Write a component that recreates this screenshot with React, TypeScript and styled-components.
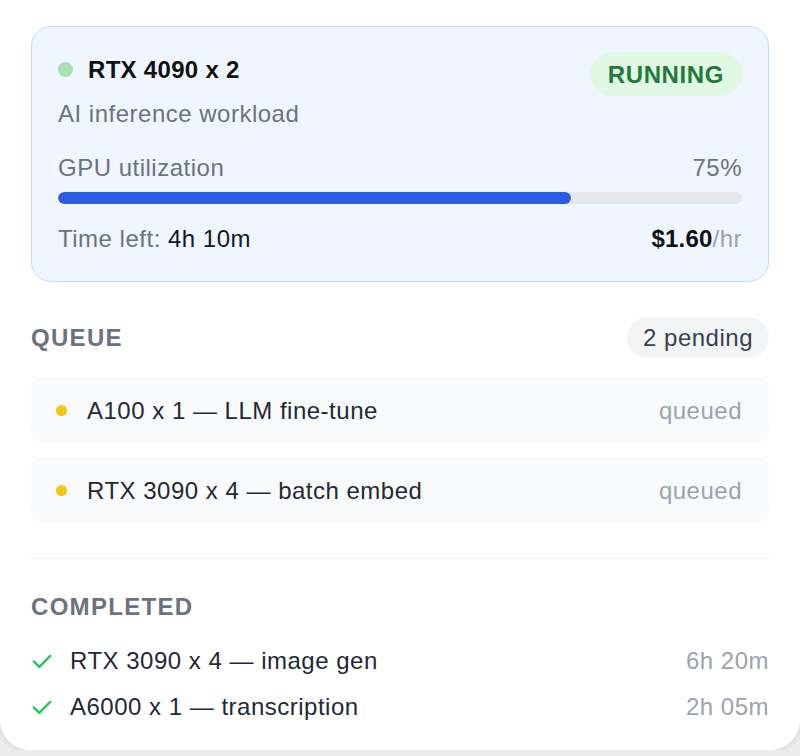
import React from "react";
import styled, { createGlobalStyle } from "styled-components";

const GlobalStyle = createGlobalStyle`
  html, body {
    margin: 0;
    padding: 0;
    background: #ebebeb;
    font-family: "Liberation Sans", Arial, Helvetica, sans-serif;
    font-size: 24px;
    line-height: 25px;
    letter-spacing: 0.5px;
  }
`;

const Panel = styled.div`
  box-sizing: border-box;
  width: 800px;
  height: 750px;
  background: #ffffff;
  border-radius: 0 0 30px 30px;
  box-shadow: 0 2px 6px rgba(0, 0, 0, 0.08);
  padding: 26px 31px 0 31px;
  display: flex;
  flex-direction: column;
`;

const ActiveCard = styled.div`
  box-sizing: border-box;
  height: 256px;
  background: #eff6ff;
  border: 1.5px solid #bfdbfe;
  border-radius: 20px;
  padding: 26px 26px 0 26px;
  display: flex;
  flex-direction: column;
`;

const Row = styled.div`
  display: flex;
  align-items: center;
  justify-content: space-between;
`;

const TopRow = styled(Row)`
  align-items: flex-start;
`;

const TitleWrap = styled.div`
  display: flex;
  align-items: center;
  gap: 15px;
  margin-top: 4px;
`;

const Dot = styled.span<{ $color: string; $size: number }>`
  display: inline-block;
  flex-shrink: 0;
  width: ${(p) => p.$size}px;
  height: ${(p) => p.$size}px;
  border-radius: 50%;
  background: ${(p) => p.$color};
`;

const Title = styled.span`
  font-weight: 700;
  color: #111111;
  letter-spacing: 0.3px;
`;

const Badge = styled.span`
  background: #e1f8e4;
  color: #217a3b;
  font-weight: 700;
  letter-spacing: 0.6px;
  padding: 10px 18px 9px;
  margin-top: -1px;
  border-radius: 22px;
`;

const Subtitle = styled.div`
  color: #6b7280;
  margin-top: 5px;
`;

const MetricRow = styled(Row)`
  margin-top: 29px;
  color: #6b7280;
`;

const Track = styled.div`
  height: 12px;
  border-radius: 6px;
  background: #e5e7eb;
  margin-top: 12px;
  overflow: hidden;
`;

const Fill = styled.div`
  height: 100%;
  border-radius: 6px;
  background: #2b5ce6;
`;

const FooterRow = styled(Row)`
  margin-top: 22px;
  color: #6b7280;
`;

const Strong = styled.span`
  color: #111827;
`;

const Price = styled.span`
  font-weight: 700;
  color: #111111;
  letter-spacing: 0.2px;
`;

const Unit = styled.span`
  color: #9ca3af;
`;

const SectionHeader = styled(Row)<{ $top: number }>`
  margin-top: ${(p) => p.$top}px;
`;

const SectionTitle = styled.span`
  font-weight: 700;
  letter-spacing: 1.3px;
  color: #6b7280;
`;

const Pill = styled.span`
  background: #f3f4f6;
  color: #374151;
  padding: 8px 16px;
  border-radius: 21px;
`;

const QueueList = styled.div`
  display: flex;
  flex-direction: column;
  gap: 14px;
  margin-top: 19px;
`;

const QueueItem = styled.div`
  box-sizing: border-box;
  height: 66px;
  background: #f9fafb;
  border-radius: 14px;
  padding: 0 27px 0 25px;
  display: flex;
  align-items: center;
  justify-content: space-between;
`;

const ItemLabel = styled.div`
  display: flex;
  align-items: center;
  gap: 20px;
  color: #1f2937;
`;

const Muted = styled.span`
  color: #9ca3af;
`;

const Divider = styled.hr`
  border: none;
  border-top: 1.5px solid #f0f1f3;
  margin: 35px 0 0 0;
`;

const DoneList = styled.div`
  display: flex;
  flex-direction: column;
  gap: 21px;
  margin-top: 29px;
`;

const DoneItem = styled(Row)``;

const DoneLabel = styled.div`
  display: flex;
  align-items: center;
  gap: 17px;
  color: #1f2937;
`;

const Check = () => (
  <svg width="22" height="22" viewBox="0 0 24 24" fill="none" stroke="#22c55e" strokeWidth="2.6" strokeLinecap="round" strokeLinejoin="round">
    <path d="M3 12.5l6 6L21 6.5" />
  </svg>
);

const queue = [
  { label: "A100 x 1 — LLM fine-tune" },
  { label: "RTX 3090 x 4 — batch embed" },
];

const done = [
  { label: "RTX 3090 x 4 — image gen", time: "6h 20m" },
  { label: "A6000 x 1 — transcription", time: "2h 05m" },
];

export default function App() {
  const util = 75;
  return (
    <>
      <GlobalStyle />
      <Panel>
        <ActiveCard>
          <TopRow>
            <TitleWrap>
              <Dot $color="#a6e1b5" $size={15} />
              <Title>RTX 4090 x 2</Title>
            </TitleWrap>
            <Badge>RUNNING</Badge>
          </TopRow>
          <Subtitle>AI inference workload</Subtitle>
          <MetricRow>
            <span>GPU utilization</span>
            <span>{util}%</span>
          </MetricRow>
          <Track>
            <Fill style={{ width: `${util}%` }} />
          </Track>
          <FooterRow>
            <span>
              Time left: <Strong>4h 10m</Strong>
            </span>
            <span>
              <Price>$1.60</Price>
              <Unit>/hr</Unit>
            </span>
          </FooterRow>
        </ActiveCard>

        <SectionHeader $top={35}>
          <SectionTitle>QUEUE</SectionTitle>
          <Pill>2 pending</Pill>
        </SectionHeader>
        <QueueList>
          {queue.map((q) => (
            <QueueItem key={q.label}>
              <ItemLabel>
                <Dot $color="#f5c518" $size={11} />
                <span>{q.label}</span>
              </ItemLabel>
              <Muted>queued</Muted>
            </QueueItem>
          ))}
        </QueueList>

        <Divider />

        <SectionHeader $top={35}>
          <SectionTitle>COMPLETED</SectionTitle>
        </SectionHeader>
        <DoneList>
          {done.map((d) => (
            <DoneItem key={d.label}>
              <DoneLabel>
                <Check />
                <span>{d.label}</span>
              </DoneLabel>
              <Muted>{d.time}</Muted>
            </DoneItem>
          ))}
        </DoneList>
      </Panel>
    </>
  );
}
